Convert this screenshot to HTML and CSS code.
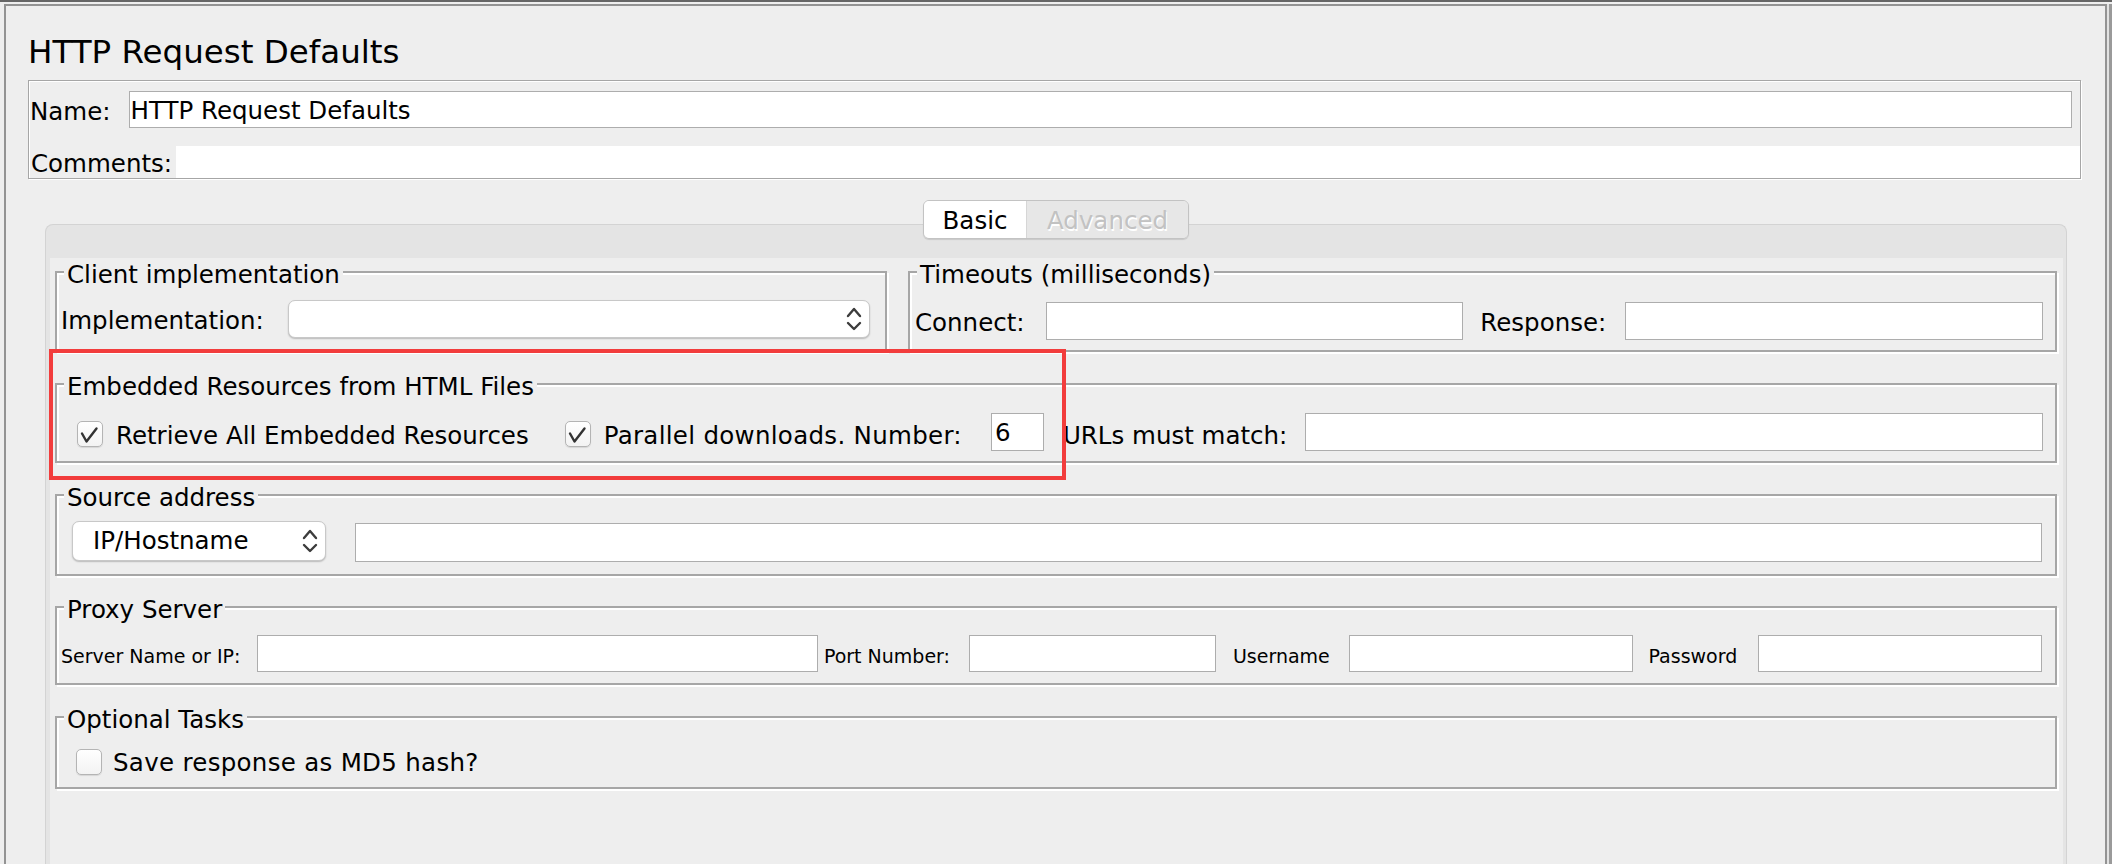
FILE: index.html
```html
<!DOCTYPE html>
<html>
<head>
<meta charset="utf-8">
<title>HTTP Request Defaults</title>
<link rel="stylesheet" href="styles.css">
</head>
<body>
<div class="topline"></div>
<div class="window">
  <div class="frame">
    <h1 class="title">HTTP Request Defaults</h1>
    <div class="namebox">
      <div class="name-row">
        <span class="lbl name-lbl">Name:</span>
        <div class="field name-field">HTTP Request Defaults</div>
      </div>
      <div class="comments-row">
        <span class="lbl comments-lbl">Comments:</span>
        <div class="comments-field"></div>
      </div>
    </div>

    <div class="tabpane">
      <div class="tabs">
        <div class="tab tab-basic">Basic</div>
        <div class="tab tab-adv">Advanced</div>
      </div>
      <div class="tabbody">
        <div class="row2">
          <div class="group">
            <div class="legend lg-12">Client implementation</div>
            <div class="crow">
              <span class="lbl l35">Implementation:</span>
              <div class="combo combo-impl">
                <svg class="arrows" width="16" height="26" viewBox="0 0 16 26"><path d="M2 10 L8 3 L14 10 M2 17 L8 23 L14 17" fill="none" stroke="#3c3c3c" stroke-width="2.4" stroke-linecap="round" stroke-linejoin="round"/></svg>
              </div>
            </div>
          </div>
          <div class="group">
            <div class="legend lg-14">Timeouts (milliseconds)</div>
            <div class="trow">
              <span class="lbl l35">Connect:</span>
              <div class="field tfield ml21"></div>
              <span class="lbl l35 ml17">Response:</span>
              <div class="field tfield ml19"></div>
            </div>
          </div>
        </div>

        <div class="group embedded">
          <div class="legend lg-13">Embedded Resources from HTML Files</div>
          <div class="erow">
            <div class="cb cb-e"><svg width="24" height="24" viewBox="1 1 24 24"><path d="M5 12.5 L9.5 20.5 L19.5 7.5" fill="none" stroke="#333" stroke-width="2.4" stroke-linecap="round" stroke-linejoin="round"/></svg></div>
            <span class="lbl l31 ml13">Retrieve All Embedded Resources</span>
            <div class="cb cb-e ml36"><svg width="24" height="24" viewBox="1 1 24 24"><path d="M5 12.5 L9.5 20.5 L19.5 7.5" fill="none" stroke="#333" stroke-width="2.4" stroke-linecap="round" stroke-linejoin="round"/></svg></div>
            <span class="lbl l31 ml13 wide">Parallel downloads. Number:</span>
            <div class="field numfield">6</div>
            <span class="lbl l31 ml19">URLs must match:</span>
            <div class="field urlfield"></div>
          </div>
        </div>

        <div class="group source">
          <div class="legend lg-10">Source address</div>
          <div class="srow">
            <div class="combo combo-ip">
              <span class="combo-text">IP/Hostname</span>
              <svg class="arrows" width="16" height="26" viewBox="0 0 16 26"><path d="M2 10 L8 3 L14 10 M2 17 L8 23 L14 17" fill="none" stroke="#3c3c3c" stroke-width="2.4" stroke-linecap="round" stroke-linejoin="round"/></svg>
            </div>
            <div class="field srcfield"></div>
          </div>
        </div>

        <div class="group proxy">
          <div class="legend lg-12">Proxy Server</div>
          <div class="prow">
            <span class="slbl">Server Name or IP:</span>
            <div class="field pfield f-server ml17"></div>
            <span class="slbl ml6">Port Number:</span>
            <div class="field pfield f-port ml19"></div>
            <span class="slbl ml17">Username</span>
            <div class="field pfield f-user ml19"></div>
            <span class="slbl ml16">Password</span>
            <div class="field pfield f-pass ml21"></div>
          </div>
        </div>

        <div class="group optional">
          <div class="legend lg-15">Optional Tasks</div>
          <div class="orow">
            <div class="cb"></div>
            <span class="lbl l26 ml11 wide">Save response as MD5 hash?</span>
          </div>
        </div>

        <div class="highlight"></div>
      </div>
    </div>
  </div>
  <div class="rgap"></div>
  <div class="rstrip"></div>
</div>
</body>
</html>
```

FILE: styles.css
```css
html, body {
  margin: 0;
  height: 864px;
  overflow: hidden;
  background: #eeeeee;
  font-family: "DejaVu Sans", "Liberation Sans", sans-serif;
  color: #000000;
}

.topline {
  height: 2px;
  background: #666666;
}

.window {
  display: flex;
  margin-top: 2px;
  height: 862px;
}

.frame {
  flex: 1;
  margin-left: 4px;
  border-top: 2px solid #939393;
  border-left: 2px solid #939393;
  border-right: 2px solid #939393;
  padding: 27px 24px 0 22px;
  min-width: 0;
}

.rgap {
  width: 2px;
  background: #e2e2e2;
}

.rstrip {
  width: 3px;
  background: #9a9a9a;
}

.title {
  margin: 0;
  font-size: 32.5px;
  line-height: 38px;
  font-weight: normal;
  color: #000000;
}

/* name / comments box */
.namebox {
  margin-top: 9px;
  border: 1px solid #a6a6a6;
  box-shadow: inset 1px 1px 0 #ffffff, 1px 1px 0 #ffffff;
  padding: 10px 0 0 1px;
}

.name-row {
  display: flex;
  align-items: flex-start;
  margin-right: 8px;
}

.lbl {
  font-size: 24.5px;
  white-space: nowrap;
  flex: none;
}

.wide {
  letter-spacing: 0.3px;
}

.name-lbl {
  line-height: 37px;
  padding-top: 2px;
}

.field {
  background: #ffffff;
  border: 1px solid #adadad;
  box-sizing: border-box;
}

.name-field {
  flex: 1;
  height: 37px;
  margin-left: 18px;
  padding: 3px 0 0 1px;
  font-size: 24.5px;
  line-height: 32px;
  white-space: nowrap;
}

.comments-row {
  display: flex;
  margin-top: 16px;
  height: 32px;
}

.comments-lbl {
  line-height: 29px;
  padding-top: 3px;
  padding-left: 1px;
}

.comments-field {
  flex: 1;
  background: #ffffff;
  margin-left: 4px;
}

/* tabbed pane */
.tabpane {
  margin: 45px 14px 0 17px;
  border: 1px solid #d3d3d3;
  border-bottom: none;
  border-radius: 8px 8px 0 0;
  background: #e4e4e4;
}

.tabs {
  display: flex;
  width: max-content;
  height: 39px;
  box-sizing: border-box;
  margin: -25px auto 19px;
  border: 1px solid #c3c3c3;
  border-radius: 6px;
  overflow: hidden;
  box-shadow: 0 1px 1px rgba(0, 0, 0, 0.12);
}

.tab {
  font-size: 24.5px;
  line-height: 35px;
  padding-top: 2px;
  text-align: center;
}

.tab-basic {
  width: 102px;
  background: #ffffff;
  color: #000000;
}

.tab-adv {
  width: 161px;
  border-left: 1px solid #d6d6d6;
  background: #e7e7e7;
  color: #c2c2c2;
  text-shadow: 1px 1.5px 0 #ffffff;
}

.tabbody {
  position: relative;
  margin: 0 3px 0 4px;
  background: #eeeeee;
  padding: 13px 6px 0 5px;
  height: 640px;
}

/* titled groups */
.row2 {
  display: grid;
  grid-template-columns: 832px 1fr;
  column-gap: 21px;
}

.group {
  border: 2px solid #a6a6a6;
  box-shadow: inset 2px 2px 0 #ffffff, 2px 2px 0 #ffffff;
}

.legend {
  width: max-content;
  margin: -11px 0 12px 7px;
  padding: 0 3px;
  background: #eeeeee;
  font-size: 24.5px;
  line-height: 26px;
  white-space: nowrap;
}

.lg-10 { margin-bottom: 10px; }
.lg-12 { margin-bottom: 12px; }
.lg-13 { margin-bottom: 13px; }
.lg-14 { margin-bottom: 14px; }
.lg-15 { margin-bottom: 15px; }

.embedded { margin-top: 31px; }
.source { margin-top: 31px; }
.proxy { margin-top: 30px; }
.optional { margin-top: 31px; }

.l35 { line-height: 35px; padding-top: 3px; }
.l31 { line-height: 31px; padding-top: 7px; }
.l26 { line-height: 26px; padding-top: 2px; }

.ml6 { margin-left: 6px; }
.ml11 { margin-left: 11px; }
.ml12 { margin-left: 12px; }
.ml13 { margin-left: 13px; }
.ml16 { margin-left: 16px; }
.ml17 { margin-left: 17px; }
.ml19 { margin-left: 19px; }
.ml21 { margin-left: 21px; }
.ml36 { margin-left: 36px; }

/* client implementation */
.crow {
  display: flex;
  align-items: center;
  padding: 0 15px 12px 4px;
}

.combo {
  display: flex;
  align-items: center;
  background: #ffffff;
  border: 1px solid #c8c8c8;
  border-radius: 7px;
  box-shadow: 0 1px 1.5px rgba(0, 0, 0, 0.22);
  box-sizing: border-box;
  padding-right: 7px;
}

.combo-impl {
  flex: 1;
  height: 38px;
  margin-left: 24px;
  justify-content: flex-end;
}

.arrows {
  flex: none;
  display: block;
}

/* timeouts */
.trow {
  display: flex;
  align-items: center;
  padding: 0 12px 10px 5px;
}

.tfield {
  flex: 1;
  height: 38px;
}

/* embedded resources */
.erow {
  display: flex;
  align-items: center;
  padding: 0 12px 10px 20px;
  height: 38px;
}

.cb {
  flex: none;
  width: 26px;
  height: 26px;
  box-sizing: border-box;
  border: 1px solid #b4b4b4;
  border-radius: 5px;
  background: linear-gradient(#ffffff, #f3f3f3);
  box-shadow: 0 1px 1px rgba(0, 0, 0, 0.1);
}

.cb svg {
  display: block;
}

.cb-e {
  margin-top: 4px;
}

.numfield {
  flex: none;
  width: 53px;
  height: 38px;
  margin-left: 29px;
  padding: 2px 0 0 3px;
  font-size: 24.5px;
  line-height: 34px;
}

.urlfield {
  flex: 1;
  height: 38px;
  margin-left: 18px;
}

/* source address */
.srow {
  display: flex;
  align-items: flex-start;
  padding: 0 13px 12px 15px;
}

.combo-ip {
  flex: none;
  width: 254px;
  height: 40px;
  justify-content: space-between;
}

.combo-text {
  font-size: 24.5px;
  line-height: 38px;
  padding-left: 20px;
  white-space: nowrap;
}

.srcfield {
  flex: 1;
  height: 39px;
  margin-top: 2px;
  margin-left: 29px;
}

/* proxy */
.prow {
  display: flex;
  align-items: flex-start;
  padding: 0 13px 11px 4px;
}

.slbl {
  flex: none;
  font-size: 19px;
  line-height: 31px;
  padding-top: 6px;
  white-space: nowrap;
}

.pfield {
  height: 37px;
  min-width: 0;
  flex-basis: 0;
}

.f-server { flex-grow: 561; }
.f-port { flex-grow: 246; }
.f-user { flex-grow: 283; }
.f-pass { flex-grow: 283; }

/* optional tasks */
.orow {
  display: flex;
  align-items: center;
  height: 28px;
  padding: 0 0 11px 19px;
}

/* annotation overlay */
.highlight {
  position: absolute;
  left: -1px;
  top: 91px;
  width: 1017px;
  height: 131px;
  box-sizing: border-box;
  border: 4px solid #f23c3c;
  pointer-events: none;
}
```
